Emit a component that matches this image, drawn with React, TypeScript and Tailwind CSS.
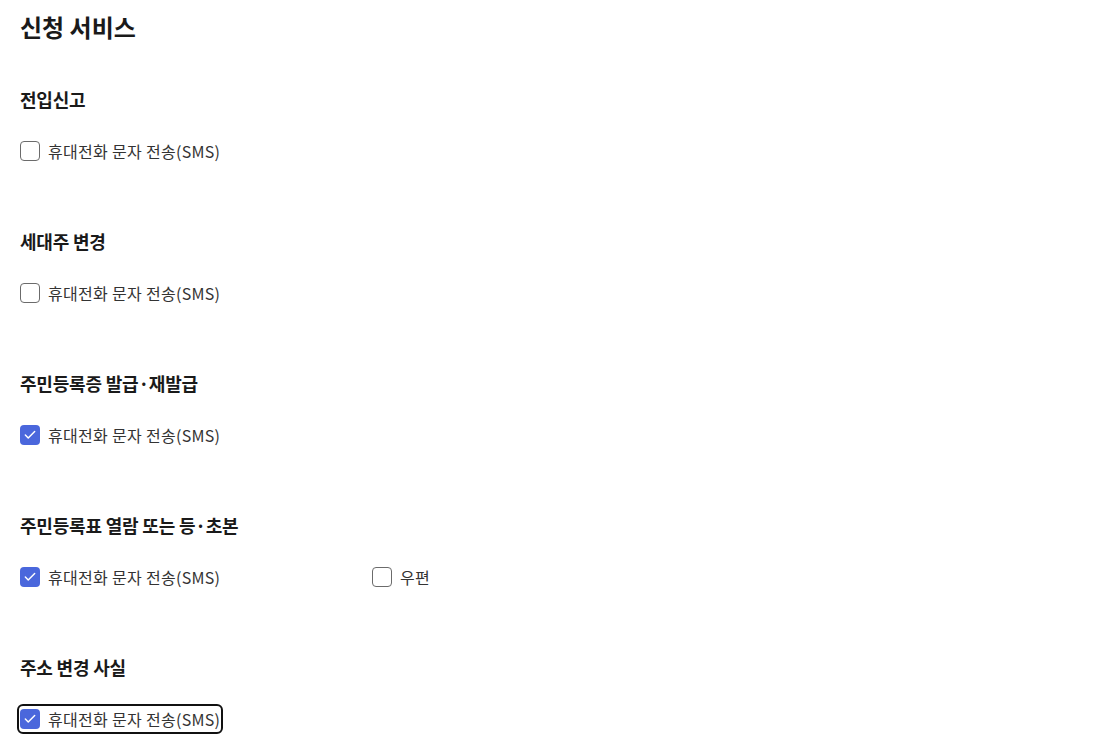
import { Check } from "lucide-react"

type Opt = { label: string; checked: boolean; focused?: boolean }
type Section = { title: string; options: Opt[] }

const SMS = "휴대전화 문자 전송(SMS)"

const sections: Section[] = [
  { title: "전입신고", options: [{ label: SMS, checked: false }] },
  { title: "세대주 변경", options: [{ label: SMS, checked: false }] },
  { title: "주민등록증 발급·재발급", options: [{ label: SMS, checked: true }] },
  {
    title: "주민등록표 열람 또는 등·초본",
    options: [
      { label: SMS, checked: true },
      { label: "우편", checked: false },
    ],
  },
  { title: "주소 변경 사실", options: [{ label: SMS, checked: true, focused: true }] },
]

function CheckOption({ opt }: { opt: Opt }) {
  return (
    <label
      className={
        "flex items-center gap-2 h-6 w-fit cursor-pointer rounded-[3px] " +
        (opt.focused ? "outline-2 outline-[#111] outline-offset-[1px]" : "")
      }
    >
      {opt.checked ? (
        <span className="w-5 h-5 rounded-[4px] bg-[#4a67dc] flex items-center justify-center">
          <Check className="w-[14px] h-[14px] text-white" strokeWidth={2.5} />
        </span>
      ) : (
        <span className="w-5 h-5 rounded-[4px] border border-[#6b6b6b] bg-white" />
      )}
      <span className="text-[16px] text-[#333] leading-6 tracking-[0.3px]">{opt.label}</span>
    </label>
  )
}

export default function App() {
  return (
    <div
      className="bg-white min-h-[748px] pl-5 pt-[11px] text-[#1a1a1a]"
      style={{ fontFamily: '"Noto Sans CJK KR", "Noto Sans", sans-serif' }}
    >
      <h1 className="text-[24px] leading-8 font-bold">신청 서비스</h1>

      <div className="mt-[44px] flex flex-col gap-[66px]">
        {sections.map((s) => (
          <section key={s.title} className="flex flex-col gap-[28px]">
            <h2 className="text-[18px] leading-6 font-bold tracking-[-0.2px]">{s.title}</h2>
            <div className="grid grid-cols-[352px_1fr]">
              {s.options.map((o) => (
                <CheckOption key={o.label} opt={o} />
              ))}
            </div>
          </section>
        ))}
      </div>
    </div>
  )
}
